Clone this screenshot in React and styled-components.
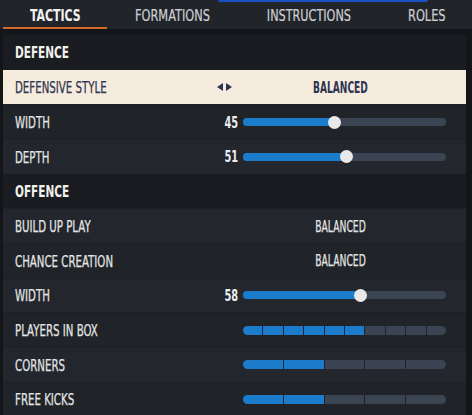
import React from "react";
import styled, { createGlobalStyle } from "styled-components";

const GlobalStyle = createGlobalStyle`
  html, body {
    margin: 0;
    padding: 0;
    background: #131519;
  }
  body {
    font-family: "DejaVu Sans Condensed", "DejaVu Sans", sans-serif;
  }
`;

const Page = styled.div`
  width: 472px;
  height: 415px;
  overflow: hidden;
  background: #131519;
  position: relative;
`;

const TopGlow = styled.div`
  position: absolute;
  top: 0;
  left: 218px;
  width: 210px;
  height: 2px;
  background: #1d4fc4;
  border-radius: 0 0 2px 2px;
`;

// condensed look: the DIN-like game font is much narrower than anything installed
const Squeeze = styled.span`
  display: inline-block;
  white-space: nowrap;
  transform: scaleX(${(p) => p.k || 0.71});
  transform-origin: ${(p) => p.origin || "left"} center;
`;

const TabBar = styled.div`
  display: flex;
  align-items: center;
  height: 29px;
  margin: 0 0 5px 0;
  padding: 0 0 0 3px;
  background: #212429;
  border-bottom: 1px solid #101215;
`;

const Tab = styled.div`
  flex: 0 0 ${(p) => p.w}px;
  height: 100%;
  display: flex;
  align-items: center;
  justify-content: center;
  box-sizing: border-box;
  font-size: 16px;
  font-weight: ${(p) => (p.active ? 700 : 400)};
  color: ${(p) => (p.active ? "#f2f2f2" : "#cdd0d5")};
  -webkit-text-stroke: ${(p) => (p.active ? "0" : "0.2px")} currentColor;
  border-bottom: 2px solid ${(p) => (p.active ? "#d2692c" : "transparent")};
  padding-top: 3px;
`;

const Panel = styled.div`
  margin: 0 6px 0 3px;
  background: #1f2228;
`;

const SectionHead = styled.div`
  height: 34.67px;
  display: flex;
  align-items: center;
  padding: 1px 0 0 12px;
  box-sizing: border-box;
  background: #1a1c21;
  color: #f1f1ee;
  font-size: 16px;
  font-weight: 700;
`;

const Row = styled.div`
  height: 34.67px;
  display: grid;
  grid-template-columns: 1fr 40px 203px;
  column-gap: 5px;
  align-items: center;
  padding: 0 20px 0 12px;
  box-sizing: border-box;
  background: ${(p) => (p.selected ? "#f5ecdd" : p.alt ? "#23262c" : "#202328")};
  border-top: 1px solid ${(p) => (p.selected ? "#f5ecdd" : "#1c1f24")};
  color: ${(p) => (p.selected ? "#2c3450" : "#e4e5e6")};
  font-size: 16px;
`;

const Label = styled.div`
  white-space: nowrap;
  padding-top: 1px;
  -webkit-text-stroke: 0.25px currentColor;
`;

const Num = styled.div`
  text-align: right;
  font-weight: 700;
  font-size: 16px;
  color: #ecedee;
`;

const Arrows = styled.div`
  justify-self: end;
  margin-right: 6px;
  display: flex;
  gap: 3px;
`;

const Value = styled.div`
  text-align: center;
  padding-right: 8px;
  font-weight: ${(p) => (p.bold ? 700 : 400)};
  font-size: 16px;
  -webkit-text-stroke: ${(p) => (p.bold ? "0" : "0.25px")} currentColor;
`;

const Track = styled.div`
  position: relative;
  height: 8px;
  border-radius: 4px;
  background: #3a4452;
`;

const Fill = styled.div`
  height: 100%;
  border-radius: 4px;
  background: #1c7ccc;
`;

const Thumb = styled.div`
  position: absolute;
  top: 50%;
  width: 13px;
  height: 13px;
  margin: -6.5px 0 0 -6.5px;
  border-radius: 50%;
  background: #e9e9e9;
`;

const Segments = styled.div`
  display: flex;
  gap: 1px;
  height: 9px;
  border-radius: 4.5px;
  overflow: hidden;
  background: #1f2228;
`;

const Seg = styled.div`
  flex: 1;
  background: ${(p) => (p.on ? "#1c7ccc" : "#3a4452")};
`;

function Slider({ value }) {
  return (
    <Track>
      <Fill style={{ width: `${value}%` }} />
      <Thumb style={{ left: `${value}%` }} />
    </Track>
  );
}

function SegBar({ total, on }) {
  return (
    <Segments>
      {Array.from({ length: total }).map((_, i) => (
        <Seg key={i} on={i < on} />
      ))}
    </Segments>
  );
}

function Tri({ dir }) {
  return (
    <svg width="6" height="8" viewBox="0 0 6 8">
      {dir === "left" ? (
        <polygon points="6,0 6,8 0,4" fill="#2c3450" />
      ) : (
        <polygon points="0,0 0,8 6,4" fill="#2c3450" />
      )}
    </svg>
  );
}

function T({ children, k, origin }) {
  return (
    <Squeeze k={k} origin={origin}>
      {children}
    </Squeeze>
  );
}

export default function App() {
  return (
    <Page>
      <GlobalStyle />
      <TopGlow />
      <TabBar>
        <Tab w={104} active>
          <T k={0.76} origin="center">TACTICS</T>
        </Tab>
        <Tab w={130}>
          <T k={0.79} origin="center">FORMATIONS</T>
        </Tab>
        <Tab w={144}>
          <T k={0.78} origin="center">INSTRUCTIONS</T>
        </Tab>
        <Tab w={91}>
          <T k={0.79} origin="center">ROLES</T>
        </Tab>
      </TabBar>
      <Panel>
        <SectionHead>
          <T k={0.73}>DEFENCE</T>
        </SectionHead>
        <Row selected>
          <Label><T>DEFENSIVE STYLE</T></Label>
          <Arrows>
            <Tri dir="left" />
            <Tri dir="right" />
          </Arrows>
          <Value bold><T k={0.63} origin="center">BALANCED</T></Value>
        </Row>
        <Row>
          <Label><T>WIDTH</T></Label>
          <Num><T k={0.68} origin="right">45</T></Num>
          <Slider value={45} />
        </Row>
        <Row alt>
          <Label><T>DEPTH</T></Label>
          <Num><T k={0.68} origin="right">51</T></Num>
          <Slider value={51} />
        </Row>
        <SectionHead>
          <T k={0.73}>OFFENCE</T>
        </SectionHead>
        <Row alt>
          <Label><T>BUILD UP PLAY</T></Label>
          <div />
          <Value><T k={0.64} origin="center">BALANCED</T></Value>
        </Row>
        <Row>
          <Label><T>CHANCE CREATION</T></Label>
          <div />
          <Value><T k={0.64} origin="center">BALANCED</T></Value>
        </Row>
        <Row alt>
          <Label><T>WIDTH</T></Label>
          <Num><T k={0.68} origin="right">58</T></Num>
          <Slider value={58} />
        </Row>
        <Row>
          <Label><T>PLAYERS IN BOX</T></Label>
          <div />
          <SegBar total={10} on={6} />
        </Row>
        <Row alt>
          <Label><T>CORNERS</T></Label>
          <div />
          <SegBar total={5} on={2} />
        </Row>
        <Row>
          <Label><T>FREE KICKS</T></Label>
          <div />
          <SegBar total={5} on={2} />
        </Row>
      </Panel>
    </Page>
  );
}
